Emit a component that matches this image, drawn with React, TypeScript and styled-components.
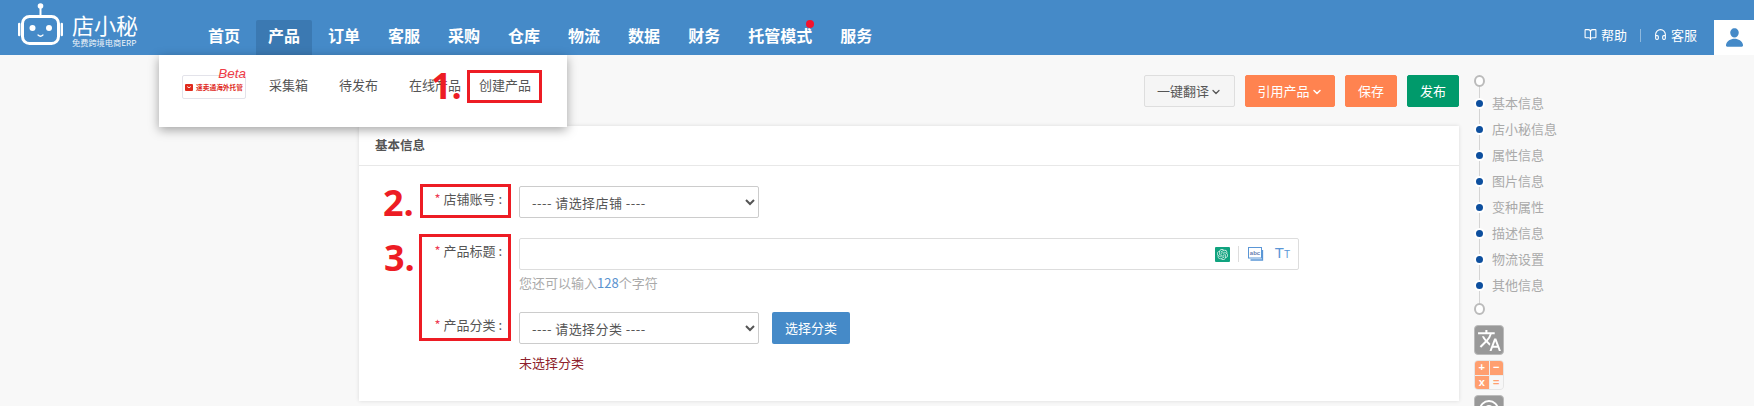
import React from "react";
import styled, { createGlobalStyle } from "styled-components";
import { ChevronDown, BookOpen, Headphones } from "lucide-react";
import { IoPerson } from "react-icons/io5";
import { MdTranslate } from "react-icons/md";
import { SiOpenai } from "react-icons/si";

const Global = createGlobalStyle`
  html, body { margin: 0; padding: 0; height: 406px; overflow: hidden; background: #f8f8f8; }
  body { font-family: "Noto Sans CJK SC", "Liberation Sans", sans-serif; font-size: 13px; color: #555; }
  * { box-sizing: border-box; }
`;

const Page = styled.div`position: relative; width: 1754px; height: 406px; overflow: hidden;`;

const Header = styled.header`
  display: flex; align-items: flex-end; height: 55px; padding-left: 18px;
  background: #458ac8; color: #fff;
`;
const Brand = styled.div`display: flex; align-items: flex-start; gap: 8px; width: 176px; align-self: flex-start; padding-top: 3px;`;
const BrandText = styled.div`display: flex; flex-direction: column; width: 66px;`;
const BrandName = styled.div`font-size: 22px; line-height: 24px; font-weight: 400; white-space: nowrap; margin-top: 9px;`;
const BrandSub = styled.div`font-size: 8.2px; line-height: 11px; white-space: nowrap; opacity: .9; margin-top: 1px;`;

const Nav = styled.nav`display: flex;`;
const NavItem = styled.div<{ $active?: boolean }>`
  position: relative; display: flex; align-items: center; height: 35px; margin: 0 2px; padding: 0 12px 6px;
  font-size: 16px; font-weight: 700; white-space: nowrap; border-radius: 2px 2px 0 0;
  background: ${(p) => (p.$active ? "#3b79b2" : "transparent")};
`;
const RedDot = styled.span`position: absolute; right: 10px; top: 0; width: 8px; height: 8px; border-radius: 50%; background: #f5122d;`;

const HeaderRight = styled.div`display: flex; align-items: flex-end; margin-left: auto;`;
const Help = styled.div`display: flex; align-items: center; gap: 4px; height: 35px; padding-bottom: 6px; font-size: 13px;`;
const HelpDivider = styled.span`width: 1px; height: 13px; margin: 0 13px 13px; background: rgba(255, 255, 255, .4);`;
const UserBox = styled.div`
  display: flex; align-items: center; justify-content: center; width: 40px; height: 35px; margin-left: 17px;
  background: #fff; color: #458ac8; font-size: 21px;
`;

const Dropdown = styled.div`
  position: absolute; left: 159px; top: 55px; width: 408px; height: 72px; z-index: 5;
  display: flex; align-items: flex-start; padding: 20px 0 0 23px; background: #fff;
  box-shadow: 0 3px 10px rgba(0, 0, 0, .35);
`;
const Promo = styled.div`
  position: relative; display: flex; align-items: center; justify-content: center; gap: 3px;
  width: 64px; height: 24px; margin-right: 23px; border: 1px solid #e3e3ea; border-radius: 2px;
  color: #e02a1c; font-size: 6.7px; font-weight: 700; white-space: nowrap;
`;
const Beta = styled.span`position: absolute; right: -1px; top: -10px; color: #ef3b46; font: italic 13.5px/15px "Liberation Sans", sans-serif;`;
const MenuLink = styled.span`width: 70px; line-height: 20px; font-size: 13px; color: #555; white-space: nowrap;`;

const Main = styled.main`display: flex; gap: 15px; padding: 20px 0 0 359px;`;
const Content = styled.div`width: 1100px;`;
const Toolbar = styled.div`display: flex; justify-content: flex-end; gap: 10px; padding-right: 0; margin-bottom: 19px;`;
const ToolButton = styled.button<{ $bg?: string; $w: number }>`
  display: flex; align-items: center; justify-content: center; gap: 1px; height: 32px; width: ${(p) => p.$w}px; padding: 0 0 2px;
  font: inherit; font-size: 13px; border-radius: 2px;
  color: ${(p) => (p.$bg ? "#fff" : "#555")};
  background: ${(p) => p.$bg ?? "#f5f5f5"};
  border: 1px solid ${(p) => p.$bg ?? "#dedede"};
  svg { margin-top: 3px; }
`;

const Card = styled.section`height: 275px; background: #fff; box-shadow: 0 0 4px rgba(0, 0, 0, .12);`;
const CardTitle = styled.h2`
  margin: 0; height: 40px; padding-left: 16px; line-height: 37px; font-size: 12.5px; font-weight: 700;
  color: #555; border-bottom: 1px solid #e8e8e8;
`;
const Form = styled.div`display: flex; flex-direction: column; gap: 20px; padding-top: 20px;`;
const Row = styled.div`display: flex; align-items: flex-start;`;
const Label = styled.label`
  flex: none; width: 143px; text-align: right; line-height: 26px; font-size: 13px; color: #555; white-space: nowrap;
`;
const Star = styled.span`color: #ee3b52; margin-right: 3px;`;
const Field = styled.div`margin-left: 17px; flex: none;`;
const InlineField = styled.div`display: flex; gap: 13px;`;
const Select = styled.select`
  display: block; width: 240px; height: 32px; padding: 0 8px; font: inherit; font-size: 13px; letter-spacing: .45px; color: #555;
  background: #fff; border: 1px solid #ccc; border-radius: 2px;
`;
const TitleBox = styled.div`
  display: flex; align-items: center; justify-content: flex-end; width: 780px; height: 32px; padding-right: 8px;
  background: #fff; border: 1px solid #ddd; border-radius: 2px;
`;
const GptIcon = styled.span`
  display: flex; align-items: center; justify-content: center; width: 15px; height: 15px; border-radius: 1px;
  background: #10a37f; color: #d8efe8; font-size: 11px;
`;
const ToolSep = styled.span`width: 1px; height: 16px; margin: 0 9px 0 8px; background: #ddd;`;
const FontIcon = styled.span`
  display: flex; align-items: baseline; margin-left: 11px; color: #5a96d6; font: 400 15px/18px "Liberation Sans", sans-serif;
`;
const FontIconSmall = styled.span`font-size: 10px;`;
const Hint = styled.div`margin-top: 4px; line-height: 18px; font-size: 13px; color: #aaa;`;
const Count = styled.span`color: #5b93cf;`;
const ErrorText = styled.div`margin-top: 10px; line-height: 18px; font-size: 13px; color: #8e1f2c;`;
const PickButton = styled.button`
  width: 78px; height: 32px; padding: 0 0 2px; font: inherit; font-size: 13px; color: #fff; background: #458ac8; border: 0; border-radius: 2px;
`;

const Side = styled.aside`position: relative; display: flex; flex-direction: column; width: 120px;`;
const Rail = styled.span`position: absolute; left: 5px; top: 6px; width: 1px; height: 228px; background: #d4d4d4;`;
const Ring = styled.span<{ $end?: boolean }>`
  position: relative; width: 11px; height: 12px; margin-top: ${(p) => (p.$end ? 5 : 0)}px; margin-bottom: ${(p) => (p.$end ? 10 : 3)}px;
  border: 2px solid #bbb; border-radius: 50%; background: #fff;
`;
const TimelineRow = styled.div`position: relative; display: flex; align-items: center; gap: 7px; height: 26px;`;
const Dot = styled.span`width: 11px; height: 11px; border: 2px solid #fff; border-radius: 50%; background: #0d4f9e;`;
const TimelineLabel = styled.span`margin-top: -2px; font-size: 13px; color: #aaa; white-space: nowrap;`;
const ToolIcon = styled.div`
  display: flex; align-items: center; justify-content: center; width: 30px; height: 30px; margin-bottom: 5px;
  border-radius: 4px; background: #999; color: #fff; font-size: 25px; border: 1px solid #bbb;
`;
const CalcIcon = styled.div`
  display: grid; grid-template-columns: 1fr 1fr; grid-template-rows: 1fr 1fr; gap: 1px; width: 30px; height: 30px; margin-bottom: 5px;
  border-radius: 4px; overflow: hidden; border: 1px solid #e5e5e5; background: #eee;
`;
const CalcCell = styled.span<{ $plain?: boolean }>`
  display: flex; align-items: center; justify-content: center; font: 700 11px/1 "Liberation Sans", sans-serif;
  background: ${(p) => (p.$plain ? "#f7f7f7" : "#ff9f6f")}; color: ${(p) => (p.$plain ? "#ff9f6f" : "#fff")};
`;

const Box = styled.div<{ $x: number; $y: number; $w: number; $h: number }>`
  position: absolute; left: ${(p) => p.$x}px; top: ${(p) => p.$y}px; width: ${(p) => p.$w}px; height: ${(p) => p.$h}px;
  border: 3px solid #ed1c24; z-index: 6;
`;
const Step = styled.span<{ $x: number; $y: number }>`
  position: absolute; left: ${(p) => p.$x}px; top: ${(p) => p.$y}px; z-index: 6;
  font: 700 36px/36px "Open Sans", "Liberation Sans", sans-serif; color: #ed1c24;
`;

const RobotLogo = () => (
  <svg width="46" height="44" viewBox="0 0 46 44" fill="none" stroke="#fff">
    <circle cx="22.5" cy="3" r="2.800" fill="#fff" stroke="none" />
    <path d="M22.500 4v8" strokeWidth="2" />
    <rect x="4.500" y="13.500" width="36" height="27" rx="7" strokeWidth="3" />
    <path d="M1.200 21v11M43.800 21v11" strokeWidth="2.400" strokeLinecap="round" />
    <circle cx="14.500" cy="25" r="3" fill="#fff" stroke="none" />
    <circle cx="31" cy="25" r="3" fill="#fff" stroke="none" />
    <path d="M20 32q2.500 2.500 5 0" strokeWidth="1.200" strokeLinecap="round" />
  </svg>
);

const PromoMark = () => (
  <svg width="8" height="7" viewBox="0 0 8 7">
    <rect width="8" height="7" rx="1" fill="#e02a1c" />
    <path d="M2.200 2.500q1.800 2.600 3.600 0" fill="none" stroke="#fff" strokeWidth=".9" />
  </svg>
);

const AbcIcon = () => (
  <svg width="16" height="14" viewBox="0 0 16 14" fill="none">
    <rect x=".5" y=".5" width="13" height="10.500" stroke="#5a96d6" />
    <path d="M14.500 3v10h-12" stroke="#5a96d6" strokeWidth="1.300" />
    <text x="7" y="8.200" fontSize="6" fontWeight="700" textAnchor="middle" fill="#6a7fb0" fontFamily="Liberation Sans">abc</text>
  </svg>
);

const WheelIcon = () => (
  <svg width="24" height="24" viewBox="0 0 24 24" fill="none" stroke="#fff" strokeWidth="2">
    <circle cx="12" cy="12" r="9" />
    <circle cx="12" cy="12" r="4" />
  </svg>
);

const navItems = ["首页", "产品", "订单", "客服", "采购", "仓库", "物流", "数据", "财务", "托管模式", "服务"];
const sections = ["基本信息", "店小秘信息", "属性信息", "图片信息", "变种属性", "描述信息", "物流设置", "其他信息"];

export default function App() {
  return (
    <Page>
      <Global />
      <Header>
        <Brand>
          <RobotLogo />
          <BrandText>
            <BrandName>店小秘</BrandName>
            <BrandSub>免费跨境电商ERP</BrandSub>
          </BrandText>
        </Brand>
        <Nav>
          {navItems.map((n) => (
            <NavItem key={n} $active={n === "产品"}>
              {n}
              {n === "托管模式" && <RedDot />}
            </NavItem>
          ))}
        </Nav>
        <HeaderRight>
          <Help><BookOpen size={13} />帮助</Help>
          <HelpDivider />
          <Help><Headphones size={13} />客服</Help>
          <UserBox><IoPerson /></UserBox>
        </HeaderRight>
      </Header>

      <Dropdown>
        <Promo>
          <Beta>Beta</Beta>
          <PromoMark />
          速卖通海外托管
        </Promo>
        <MenuLink>采集箱</MenuLink>
        <MenuLink>待发布</MenuLink>
        <MenuLink>在线产品</MenuLink>
        <MenuLink>创建产品</MenuLink>
      </Dropdown>

      <Main>
        <Content>
          <Toolbar>
            <ToolButton $w={91}>一键翻译<ChevronDown size={12} strokeWidth={2.500} /></ToolButton>
            <ToolButton $w={90} $bg="#ff8350">引用产品<ChevronDown size={12} strokeWidth={3} /></ToolButton>
            <ToolButton $w={52} $bg="#ff8350">保存</ToolButton>
            <ToolButton $w={52} $bg="#009a6b">发布</ToolButton>
          </Toolbar>
          <Card>
            <CardTitle>基本信息</CardTitle>
            <Form>
              <Row>
                <Label><Star>*</Star>店铺账号 :</Label>
                <Field>
                  <Select defaultValue="shop"><option value="shop">---- 请选择店铺 ----</option></Select>
                </Field>
              </Row>
              <Row>
                <Label><Star>*</Star>产品标题 :</Label>
                <Field>
                  <TitleBox>
                    <GptIcon><SiOpenai /></GptIcon>
                    <ToolSep />
                    <AbcIcon />
                    <FontIcon>T<FontIconSmall>T</FontIconSmall></FontIcon>
                  </TitleBox>
                  <Hint>您还可以输入<Count>128</Count>个字符</Hint>
                </Field>
              </Row>
              <Row>
                <Label><Star>*</Star>产品分类 :</Label>
                <Field>
                  <InlineField>
                    <Select defaultValue="cat"><option value="cat">---- 请选择分类 ----</option></Select>
                    <PickButton>选择分类</PickButton>
                  </InlineField>
                  <ErrorText>未选择分类</ErrorText>
                </Field>
              </Row>
            </Form>
          </Card>
        </Content>
        <Side>
          <Rail />
          <Ring />
          {sections.map((s) => (
            <TimelineRow key={s}>
              <Dot />
              <TimelineLabel>{s}</TimelineLabel>
            </TimelineRow>
          ))}
          <Ring $end />
          <ToolIcon><MdTranslate /></ToolIcon>
          <CalcIcon>
            <CalcCell>+</CalcCell>
            <CalcCell>−</CalcCell>
            <CalcCell>x</CalcCell>
            <CalcCell $plain>=</CalcCell>
          </CalcIcon>
          <ToolIcon><WheelIcon /></ToolIcon>
        </Side>
      </Main>

      <Box $x={467} $y={70} $w={75} $h={33} />
      <Box $x={420} $y={184} $w={91} $h={34} />
      <Box $x={419} $y={234} $w={92} $h={107} />
      <Step $x={431} $y={68}>1.</Step>
      <Step $x={383} $y={185}>2.</Step>
      <Step $x={384} $y={240}>3.</Step>
    </Page>
  );
}
